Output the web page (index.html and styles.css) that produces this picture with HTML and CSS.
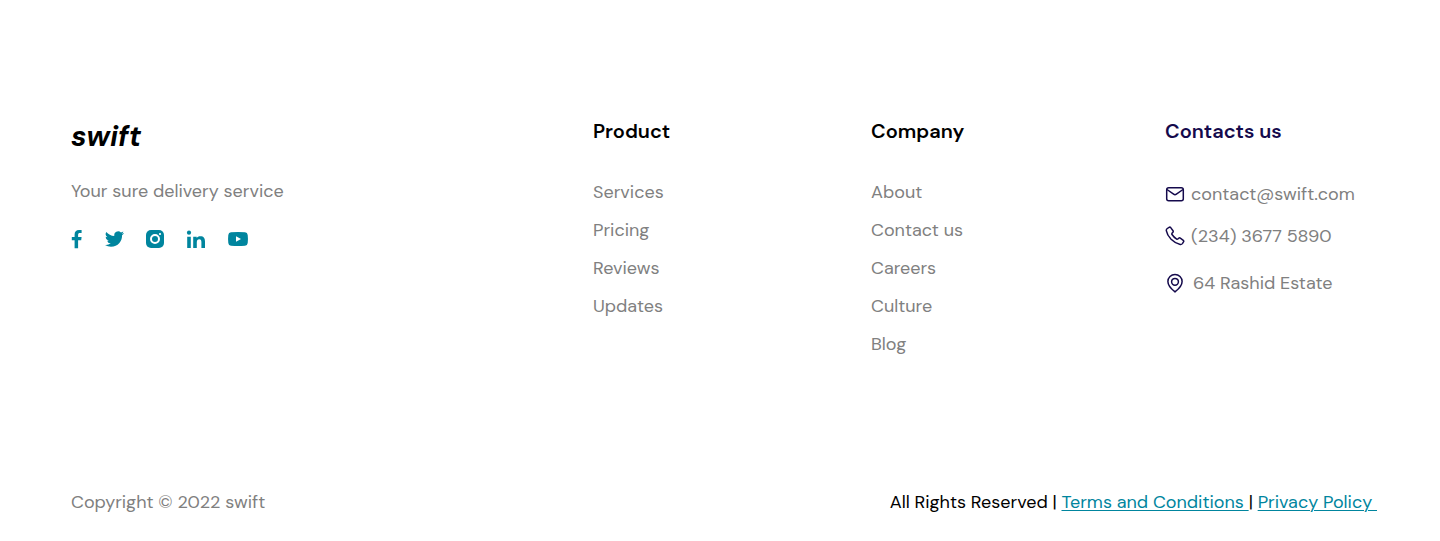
FILE: index.html
```html
<!DOCTYPE html>
<html lang="en">
<head>
<meta charset="utf-8">
<meta name="viewport" content="width=device-width, initial-scale=1">
<title>swift</title>
<link rel="stylesheet" href="styles.css">
</head>
<body>
<footer class="footer">
  <div class="columns">
    <section class="brand">
      <p class="logo">swift</p>
      <p class="tagline">Your sure delivery service</p>
      <div class="social">
        <a href="#" aria-label="Facebook"><svg width="13" height="20" viewBox="0 0 13 20"><path d="M3.600 19.200V11.200H.8V8h2.800V5.600C3.600 2.600 5.200 1 8 1h2.600v3.100H9C7.600 4.100 7.100 4.700 7.100 5.900V8h3.500l-.4 3.200H7.100v8z"/></svg></a>
        <a href="#" aria-label="Twitter"><svg width="19" height="20" viewBox="0 0 24 24"><path d="M23.950 4.570a10 10 0 0 1-2.820.770 4.960 4.960 0 0 0 2.160-2.720c-.950.550-2 .950-3.130 1.180a4.920 4.920 0 0 0-8.380 4.480C7.690 8.090 4.070 6.130 1.640 3.160a4.900 4.900 0 0 0 1.520 6.570 4.900 4.900 0 0 1-2.230-.610v.060a4.920 4.920 0 0 0 3.950 4.830 5 5 0 0 1-2.210.080 4.940 4.940 0 0 0 4.600 3.420A9.870 9.870 0 0 1 0 19.540a14 14 0 0 0 7.550 2.210c9.050 0 14-7.500 14-13.980 0-.210 0-.420-.020-.630a9.900 9.900 0 0 0 2.460-2.550z"/></svg></a>
        <a href="#" aria-label="Instagram"><svg width="20" height="20" viewBox="0 0 20 20"><rect x="1" y="1" width="18" height="18" rx="5"/><circle class="cutout" cx="10" cy="10" r="4"/><circle class="dot" cx="15" cy="5" r="1.100"/></svg></a>
        <a href="#" aria-label="LinkedIn"><svg width="20" height="20" viewBox="0 0 20 20"><circle cx="3" cy="3.700" r="2.100"/><path d="M1.200 7.700h3.600V19H1.200zM7.200 7.700h3.500V9c.7-1.200 1.900-1.700 3.700-1.700 3.400 0 4.600 2 4.600 5.300V19h-3.600v-5.700c0-1.900-.5-3-2.100-3-1.700 0-2.500 1.200-2.500 3.100V19H7.200z"/></svg></a>
        <a href="#" aria-label="YouTube"><svg width="22" height="20" viewBox="0 0 22 20"><path d="M4 3.300Q11 2.500 18 3.300Q20.500 3.500 20.700 6Q21.200 10 20.700 14Q20.500 16.500 18 16.700Q11 17.500 4 16.700Q1.500 16.500 1.300 14Q.8 10 1.300 6Q1.500 3.500 4 3.300z"/><path class="dot" d="M9 7.200v5.600l5-2.800z"/></svg></a>
      </div>
    </section>
    <nav aria-labelledby="product">
      <h2 id="product">Product</h2>
      <ul class="links">
        <li><a href="#">Services</a></li>
        <li><a href="#">Pricing</a></li>
        <li><a href="#">Reviews</a></li>
        <li><a href="#">Updates</a></li>
      </ul>
    </nav>
    <nav aria-labelledby="company">
      <h2 id="company">Company</h2>
      <ul class="links">
        <li><a href="#">About</a></li>
        <li><a href="#">Contact us</a></li>
        <li><a href="#">Careers</a></li>
        <li><a href="#">Culture</a></li>
        <li><a href="#">Blog</a></li>
      </ul>
    </nav>
    <section class="contacts">
      <h2>Contacts us</h2>
      <address>
        <a href="mailto:contact@swift.com"><svg width="20" height="20" viewBox="0 0 20 20"><rect x="1.700" y="3.700" width="16.600" height="13" rx="2"/><path d="M2 5.500l6.600 4.700q1.400 1 2.800 0L18 5.500"/></svg>contact@swift.com</a>
        <a href="tel:+23436775890"><svg width="20" height="20" viewBox="0 0 20 20"><path d="M2.300 2.500L4.100 1.300Q5 .8 5.700 1.600L8 4.700Q8.500 5.500 7.900 6.200L7 7.300Q6.600 7.900 7 8.500Q8.900 11.400 11.700 13.100Q12.300 13.400 12.800 13L13.900 12.100Q14.600 11.600 15.300 12.100L18.300 14.300Q19.100 15 18.500 15.900L17.400 17.600Q16.600 18.600 15.200 18.400Q10.500 17.500 6.100 13.200Q2 9 1.300 4.700Q1.200 3.300 2.300 2.500z"/></svg>(234) 3677 5890</a>
        <span class="place"><svg width="20" height="20" viewBox="0 0 20 20"><path d="M10 18.900C7.400 16.900 2.900 13.600 2.900 8.600a7.100 7.100 0 0 1 14.200 0c0 5-4.500 8.300-7.100 10.300z"/><circle cx="10" cy="8.800" r="3.400"/></svg>64 Rashid Estate</span>
      </address>
    </section>
  </div>
  <div class="legal">
    <p class="copyright">Copyright © 2022 swift</p>
    <p>All Rights Reserved | <a href="#">Terms and Conditions&nbsp;</a>| <a href="#">Privacy Policy&nbsp;</a></p>
  </div>
</footer>
</body>
</html>
```
FILE: styles.css
```css
* {
  box-sizing: border-box;
}

body {
  margin: 0;
  background: #fff;
  color: #000;
  font-family: "DM Sans", Inter, "Open Sans", sans-serif;
  font-size: 18px;
  line-height: 24px;
}

p,
h2,
ul {
  margin: 0;
  padding: 0;
}

a {
  color: inherit;
  text-decoration: none;
}

svg {
  display: block;
  flex: none;
}

.footer {
  padding: 119px 63px 27px 71px;
}

.columns {
  display: grid;
  grid-template-columns: 522fr 278fr 294fr 212fr;
  color: #808080;
  white-space: nowrap;
}

.logo {
  color: #000;
  font-size: 29px;
  font-style: italic;
  font-weight: 700;
  line-height: 34px;
}

.tagline {
  margin-top: 26px;
}

.social {
  display: flex;
  gap: 21px;
  margin-top: 26px;
}

.social svg {
  fill: #00859e;
}

.social .cutout {
  fill: none;
  stroke: #fff;
  stroke-width: 2;
}

.social .dot {
  fill: #fff;
}

h2 {
  color: #000;
  font-size: 20px;
  font-weight: 600;
  line-height: 24px;
}

.links {
  display: grid;
  gap: 14px;
  margin-top: 37px;
  list-style: none;
}

.contacts h2 {
  color: #150a4c;
}

address {
  display: grid;
  gap: 18px;
  margin-top: 39px;
  font-style: normal;
}

address a,
.place {
  display: flex;
  align-items: center;
  gap: 6px;
}

.place {
  margin-top: 5px;
  gap: 8px;
}

address svg {
  fill: none;
  stroke: #150a4c;
  stroke-width: 1.5;
  stroke-linejoin: round;
}

.legal {
  display: flex;
  flex-wrap: wrap;
  justify-content: space-between;
  margin-top: 134px;
}

.legal a {
  color: #00859e;
  text-decoration: underline;
  text-decoration-thickness: 1px;
  text-underline-offset: 2px;
}

.copyright {
  color: #808080;
}
```
